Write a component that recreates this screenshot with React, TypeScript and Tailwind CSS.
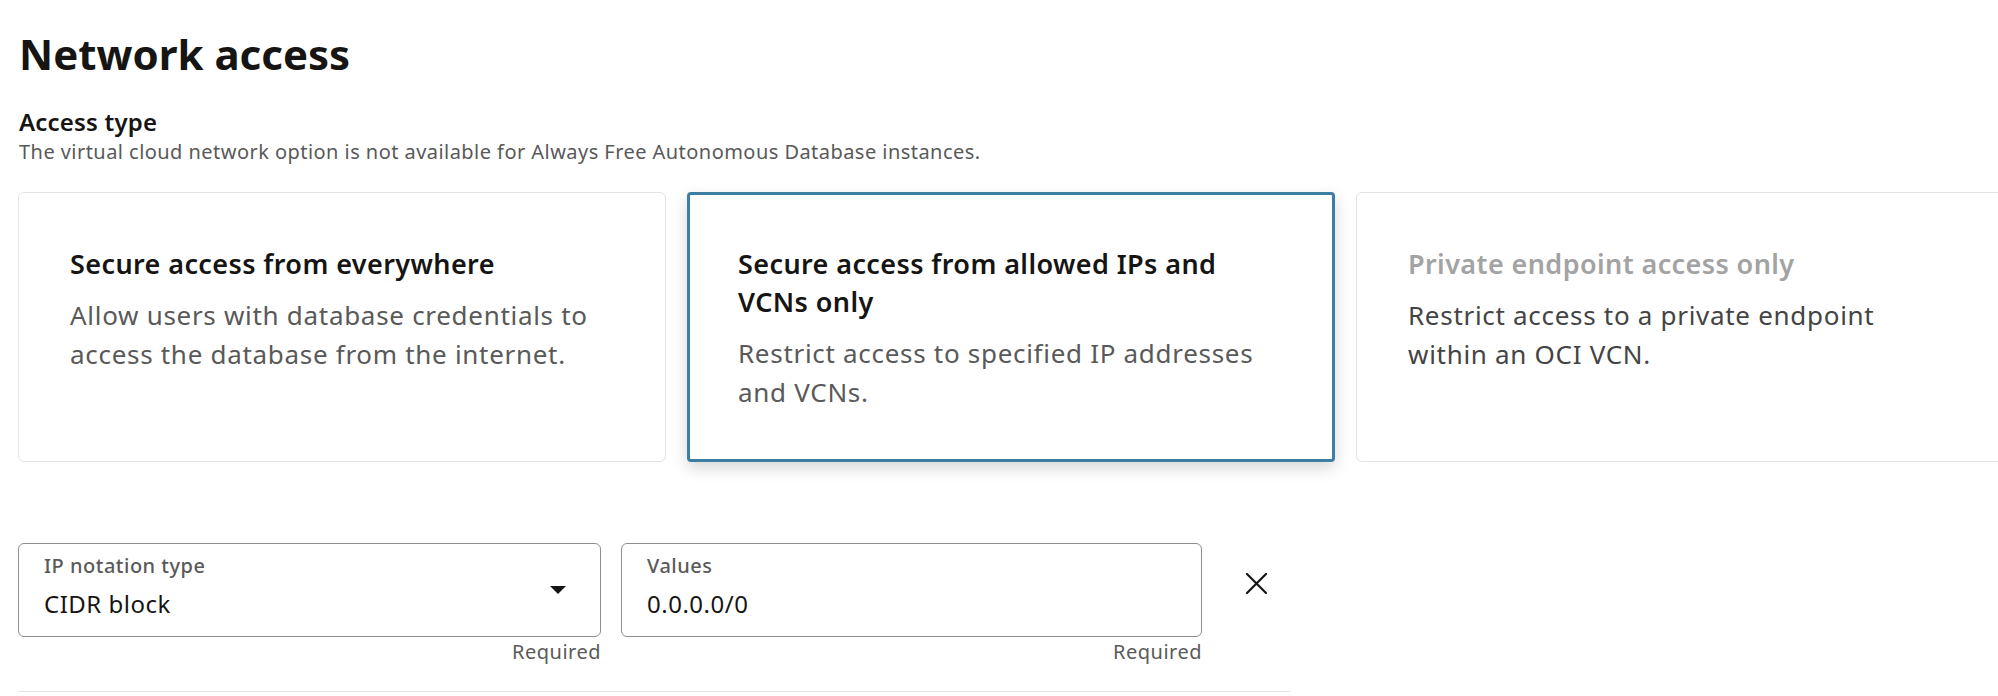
import React from 'react'

interface AccessOption {
  title: string
  description: string
  selected?: boolean
  disabled?: boolean
}

const OPTIONS: AccessOption[] = [
  {
    title: 'Secure access from everywhere',
    description: 'Allow users with database credentials to access the database from the internet.',
  },
  {
    title: 'Secure access from allowed IPs and VCNs only',
    description: 'Restrict access to specified IP addresses and VCNs.',
    selected: true,
  },
  {
    title: 'Private endpoint access only',
    description: 'Restrict access to a private endpoint within an OCI VCN.',
    disabled: true,
  },
]

function OptionCard({ option }: { option: AccessOption }) {
  const box = option.selected
    ? 'border-[3px] border-[#3c7fa3] rounded-[4px] pt-[50px] pb-[47px] pl-[48px] pr-[64px] shadow-[0_6px_16px_rgba(0,0,0,0.16)]'
    : 'border border-[#e4e4e4] rounded-[6px] pt-[52px] pb-[49px] pl-[51px] pr-[66px]'

  return (
    <div className={`w-[648px] shrink-0 bg-white ${box}`}>
      <h3
        className={`text-[27px] leading-[38px] font-semibold tracking-[0.4px] ${
          option.disabled ? 'text-[#a3a3a3]' : 'text-[#161513]'
        }`}
      >
        {option.title}
      </h3>
      <p
        className={`mt-[13px] text-[26px] leading-[39px] tracking-[0.7px] ${
          option.disabled ? 'text-[#444444]' : 'text-[#595959]'
        }`}
      >
        {option.description}
      </p>
    </div>
  )
}

function Field({
  label,
  value,
  width,
  select,
}: {
  label: string
  value: string
  width: string
  select?: boolean
}) {
  return (
    <div className={`flex flex-col ${width}`}>
      <div className="h-[94px] flex items-center border border-[#8e8e8e] rounded-[6px] pl-[25px] pr-[34px]">
        <div className="flex-1 min-w-0 self-start pt-[9px]">
          <div className="text-[20px] leading-[26px] font-medium tracking-[0.5px] text-[#5a5a5a]">{label}</div>
          <div className="mt-[10px] text-[24px] leading-[30px] tracking-[0.5px] text-[#161513]">{value}</div>
        </div>
        {select && (
          <svg width="16" height="8" viewBox="0 0 16 8" className="shrink-0">
            <path d="M0 0 L16 0 L8 8 Z" fill="#161513" />
          </svg>
        )}
      </div>
      <div className="mt-[2px] text-right text-[20px] leading-[26px] tracking-[0.5px] text-[#5a5a5a]">Required</div>
    </div>
  )
}

export default function App() {
  return (
    <div className="h-[696px] w-full overflow-hidden bg-white pl-[18px] pt-[30px] font-['Noto_Sans','Open_Sans',sans-serif]">
      <h1 className="pl-[1px] text-[42px] leading-[48px] font-bold text-[#161513]">Network access</h1>

      <div className="mt-[29px] pl-[1px] text-[24px] leading-[30px] font-semibold tracking-[0.2px] text-[#161513]">
        Access type
      </div>
      <div className="mt-[2px] pl-[1px] text-[20px] leading-[26px] tracking-[0.45px] text-[#595959]">
        The virtual cloud network option is not available for Always Free Autonomous Database instances.
      </div>

      <div className="mt-[27px] flex items-stretch gap-[21px]">
        {OPTIONS.map(o => (
          <OptionCard key={o.title} option={o} />
        ))}
      </div>

      <div className="mt-[81px] flex items-start">
        <Field label="IP notation type" value="CIDR block" width="w-[583px]" select />
        <Field label="Values" value="0.0.0.0/0" width="w-[581px] ml-[20px]" />
        <button className="ml-[44px] mt-[30px] shrink-0" aria-label="Remove">
          <svg width="21" height="21" viewBox="0 0 21 21">
            <path d="M1 1 L20 20 M20 1 L1 20" stroke="#161513" strokeWidth="2.2" strokeLinecap="square" />
          </svg>
        </button>
      </div>

      <div className="mt-[26px] h-px w-[1272px] bg-[#e4e4e4]" />
    </div>
  )
}
